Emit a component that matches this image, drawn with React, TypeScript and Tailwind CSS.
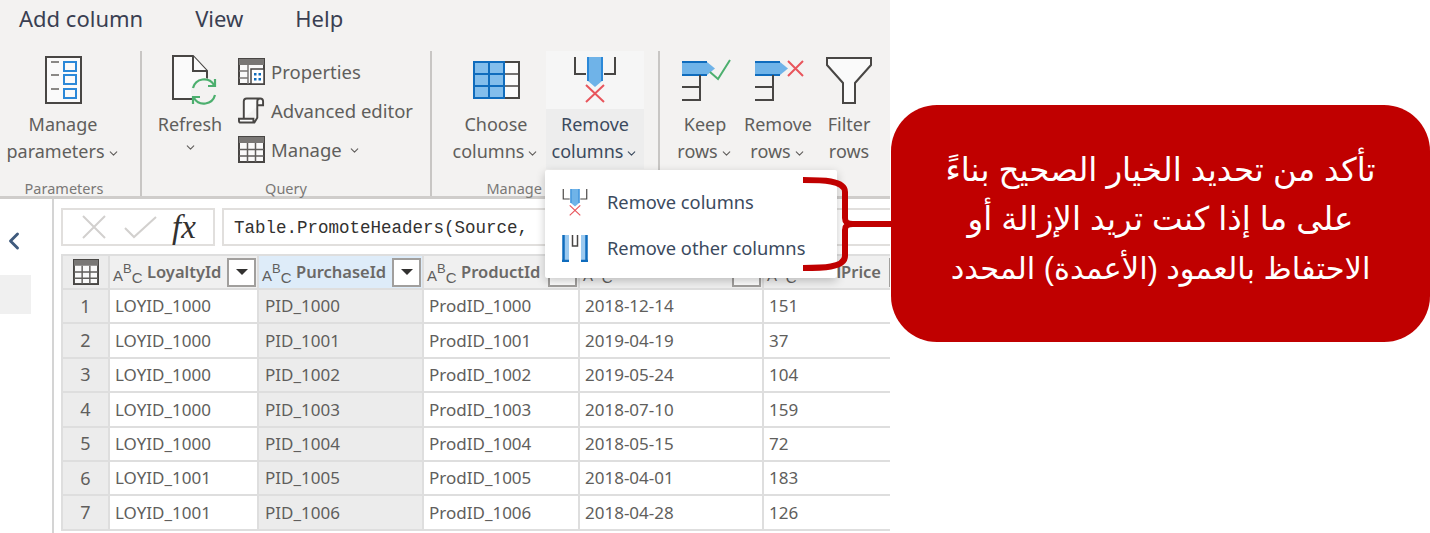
import { ChevronDown, ChevronLeft } from "lucide-react"

const UI = "font-['Noto_Sans',sans-serif]"
const COLS = "grid grid-cols-[49px_149px_165px_156px_184px_160px]"

const rows = [
  ["1", "LOYID_1000", "PID_1000", "ProdID_1000", "2018-12-14", "151"],
  ["2", "LOYID_1000", "PID_1001", "ProdID_1001", "2019-04-19", "37"],
  ["3", "LOYID_1000", "PID_1002", "ProdID_1002", "2019-05-24", "104"],
  ["4", "LOYID_1000", "PID_1003", "ProdID_1003", "2018-07-10", "159"],
  ["5", "LOYID_1000", "PID_1004", "ProdID_1004", "2018-05-15", "72"],
  ["6", "LOYID_1001", "PID_1005", "ProdID_1005", "2018-04-01", "183"],
  ["7", "LOYID_1001", "PID_1006", "ProdID_1006", "2018-04-28", "126"],
]

function ManageParamsIcon() {
  return (
    <svg width="37" height="48" viewBox="0 0 37 48" fill="none">
      <rect x="1" y="1" width="35" height="46" fill="#fafafa" stroke="#484644" strokeWidth="2" />
      <path d="M6 6h8M6 19h8M6 33h8" stroke="#8a8886" strokeWidth="2" />
      <rect x="19" y="6" width="12" height="9" stroke="#2b88d8" strokeWidth="2" />
      <rect x="19" y="19" width="12" height="9" stroke="#2b88d8" strokeWidth="2" />
      <rect x="19" y="33" width="12" height="9" stroke="#2b88d8" strokeWidth="2" />
    </svg>
  )
}

function RefreshIcon() {
  return (
    <svg width="46" height="50" viewBox="0 0 46 50" fill="none">
      <path d="M1 1h20l14 15v28H1z" fill="#fafafa" stroke="#484644" strokeWidth="2" />
      <path d="M21 1v15h14" fill="#fafafa" stroke="#484644" strokeWidth="2" />
      <circle cx="32" cy="36" r="13" fill="#f3f2f1" />
      <path d="M21 33a11.500 11.500 0 0 1 21-3" stroke="#4caf6e" strokeWidth="2.200" />
      <path d="M43 40a11.500 11.500 0 0 1-21 3" stroke="#4caf6e" strokeWidth="2.200" />
      <path d="M43 24v7h-7M21 49v-7h7" stroke="#4caf6e" strokeWidth="2.200" />
    </svg>
  )
}

function PropertiesIcon() {
  return (
    <svg width="27" height="27" viewBox="0 0 27 27" fill="none">
      <rect x="1" y="1" width="25" height="25" fill="#fafafa" stroke="#484644" strokeWidth="2" />
      <rect x="1" y="1" width="25" height="6" fill="#797775" />
      <path d="M10 7v19M1 13h9M1 20h9" stroke="#797775" strokeWidth="1.500" />
      <rect x="13" y="11" width="13" height="15" fill="#fff" stroke="#484644" strokeWidth="1.500" />
      <path d="M16 15h2.500v2.500H16zM20.500 15H23v2.500h-2.500zM16 20h2.500v2.500H16zM20.500 20H23v2.500h-2.500z" fill="#0f6cbd" />
    </svg>
  )
}

function EditorIcon() {
  return (
    <svg width="28" height="28" viewBox="0 0 28 28" fill="none">
      <path d="M6 22V4a3 3 0 0 1 3-3h14a3 3 0 0 1 3 3v4h-5M23 1a3 3 0 0 0-3 3v17l-3 5H3a2 2 0 0 1-2-2v-2h15v4" fill="#fafafa" stroke="#484644" strokeWidth="2" />
    </svg>
  )
}

function TableIcon({ size = 27 }: { size?: number }) {
  return (
    <svg width={size} height={size} viewBox="0 0 27 27" fill="none">
      <rect x="1" y="1" width="25" height="25" fill="#fafafa" stroke="#484644" strokeWidth="2" />
      <rect x="1" y="1" width="25" height="6" fill="#797775" />
      <path d="M9.500 7v19M17.500 7v19M1 13.500h25M1 20h25" stroke="#605e5c" strokeWidth="1.500" />
    </svg>
  )
}

function ChooseColumnsIcon() {
  return (
    <svg width="47" height="38" viewBox="0 0 47 38" fill="none">
      <rect x="1" y="1" width="30" height="36" fill="#83beec" />
      <rect x="31" y="1" width="15" height="36" fill="#fafafa" stroke="#484644" strokeWidth="2" />
      <path d="M31 13h15M31 25h15" stroke="#484644" strokeWidth="1.500" />
      <path d="M1 1h30v36H1zM16 1v36M1 13h30M1 25h30" stroke="#0f6cbd" strokeWidth="2" />
    </svg>
  )
}

function RemoveColumnsIcon({ small = false }: { small?: boolean }) {
  const w = small ? 26 : 42
  const h = small ? 27 : 46
  return (
    <svg width={w} height={h} viewBox="0 0 42 46" fill="none">
      <path d="M1 0v17h11M41 0v17H30" stroke="#484644" strokeWidth="2" />
      <path d="M14 0h14v24l-7 6-7-6z" fill="#6fb3e8" />
      <path d="M14 0v24M28 0v24" stroke="#2b88d8" strokeWidth="2" />
      <path d="M12 28l18 17M30 28L12 45" stroke="#e8555c" strokeWidth="2" />
    </svg>
  )
}

function RemoveOtherIcon() {
  return (
    <svg width="26" height="28" viewBox="0 0 26 28" fill="none">
      <path d="M1 1h6v26H1z" fill="#9ccaf0" />
      <path d="M19 1h6v26h-6z" fill="#9ccaf0" />
      <path d="M1.500 1v26M0 27h7M19 27h7M24.500 1v26" stroke="#0f6cbd" strokeWidth="2.500" />
      <path d="M10.500 1v11h5V1" stroke="#484644" strokeWidth="1.500" />
    </svg>
  )
}

function RowsIcon({ remove = false }: { remove?: boolean }) {
  return (
    <svg width="52" height="42" viewBox="0 0 52 42" fill="none" className="ml-[3px]">
      <path d="M1 3h25l8 6.500-8 6.500H1z" fill="#6fb3e8" />
      <path d="M1 3h25M1 16h25" stroke="#0f6cbd" strokeWidth="2" />
      <path d="M1 28h17M1 41h18V16" stroke="#484644" strokeWidth="2" />
      {remove ? (
        <path d="M34 2l15 15M49 2L34 17" stroke="#e8555c" strokeWidth="2" />
      ) : (
        <path d="M29 13l8 7L49 1" stroke="#4caf6e" strokeWidth="2" />
      )}
    </svg>
  )
}

function FilterIcon() {
  return (
    <svg width="46" height="47" viewBox="0 0 46 47" fill="none">
      <path d="M1 1h44v7L29 26v20H17V26L1 8z" fill="#fafafa" stroke="#484644" strokeWidth="2" />
    </svg>
  )
}

function TypeIcon() {
  return (
    <span className="inline-flex w-[30px] shrink-0 items-center font-['Liberation_Sans',sans-serif] text-[15px] leading-none text-[#605e5c]">
      <span className="translate-y-[3px]">A</span>
      <span className="-translate-y-[4px] text-[13px]">B</span>
      <span className="translate-y-[5px]">C</span>
    </span>
  )
}

function FilterButton() {
  return (
    <span className="flex h-[29px] w-[29px] shrink-0 items-center justify-center border-2 border-[#a19f9d] bg-white">
      <span className="h-0 w-0 border-x-[6px] border-t-[6px] border-x-transparent border-t-[#323130]" />
    </span>
  )
}

function RibbonButton({
  icon,
  line1,
  line2,
  width,
  caret = true,
  active = false,
}: {
  icon: React.ReactNode
  line1: string
  line2?: string
  width: string
  caret?: boolean
  active?: boolean
}) {
  return (
    <div className={`flex flex-col items-center ${width}`}>
      <div className={`flex h-[58px] w-full items-center justify-center ${active ? "bg-[#f6f6f6]" : ""}`}>{icon}</div>
      <div className={`flex h-[60px] w-full flex-col items-center pt-[2px] text-[18px] leading-[27px] ${active ? "bg-[#ededed] text-[#3b4a5e]" : "text-[#605e5c]"}`}>
        <span>{line1}</span>
        <span className="flex items-center gap-[2px]">
          {line2}
          {caret && <ChevronDown size={13} strokeWidth={2} className="mt-[3px]" />}
        </span>
      </div>
    </div>
  )
}

function GroupLabel({ children }: { children: React.ReactNode }) {
  return <div className="flex h-[27px] items-end justify-center text-[14.500px] leading-[16px] text-[#7a7876]">{children}</div>
}

function SmallAction({ icon, label, caret = false }: { icon: React.ReactNode; label: string; caret?: boolean }) {
  return (
    <div className="flex h-[39px] items-center gap-[6px] text-[18.500px] text-[#605e5c]">
      <span className="flex w-[27px] justify-center">{icon}</span>
      {label}
      {caret && <ChevronDown size={13} strokeWidth={2} className="mt-[2px]" />}
    </div>
  )
}

function HeaderCell({ name, selected = false }: { name: string; selected?: boolean }) {
  return (
    <div className={`flex items-center border-r-2 border-[#dedede] pl-[3px] pr-[1px] ${selected ? "bg-[#deecf9]" : "bg-[#f0f0f0]"}`}>
      <TypeIcon />
      <span className="ml-[4px] flex-1 truncate text-[16.500px] font-semibold text-[#6b6967]">{name}</span>
      <FilterButton />
    </div>
  )
}

export default function App() {
  return (
    <div className={`flex h-[533px] w-[1430px] overflow-hidden bg-white ${UI}`}>
      {/* Power Query window */}
      <div className="relative h-[533px] w-[890px] shrink-0 overflow-hidden">
        <header className="h-[199px] border-b-[3px] border-[#cfcdcb] bg-[#f3f2f1]">
          <nav className="flex h-[51px] pb-[15px] pl-[19px] text-[22px] text-[#3a3f52]">
            <span className="flex items-center">Add column</span>
            <span className="ml-[52px] flex items-center">View</span>
            <span className="ml-[52px] flex items-center">Help</span>
          </nav>

          <div className="flex h-[145px]">
            <section className="w-[142px] border-r-2 border-[#c8c6c4]">
              <div className="flex justify-start">
                <RibbonButton width="w-[126px]" icon={<ManageParamsIcon />} line1="Manage" line2="parameters" />
              </div>
              <div className="w-[128px]">
                <GroupLabel>Parameters</GroupLabel>
              </div>
            </section>

            <section className="w-[290px] border-r-2 border-[#c8c6c4]">
              <div className="flex h-[118px] pl-[15px]">
                <RibbonButton width="w-[66px]" icon={<div className="ml-[9px]"><RefreshIcon /></div>} line1="Refresh" />
                <div className="ml-[15px] pt-[1px]">
                  <SmallAction icon={<PropertiesIcon />} label="Properties" />
                  <SmallAction icon={<EditorIcon />} label="Advanced editor" />
                  <SmallAction icon={<TableIcon />} label="Manage" caret />
                </div>
              </div>
              <GroupLabel>Query</GroupLabel>
            </section>

            <section className="w-[228px] border-r-2 border-[#c8c6c4]">
              <div className="flex h-[118px] pl-[14px]">
                <RibbonButton width="w-[100px]" icon={<ChooseColumnsIcon />} line1="Choose" line2="columns" />
                <RibbonButton width="w-[98px]" active icon={<RemoveColumnsIcon />} line1="Remove" line2="columns" />
              </div>
              <GroupLabel>Manage columns</GroupLabel>
            </section>

            <section className="flex-1">
              <div className="flex h-[118px] gap-[4px] pl-[14px]">
                <RibbonButton width="w-[62px]" icon={<RowsIcon />} line1="Keep" line2="rows" />
                <RibbonButton width="w-[76px]" icon={<RowsIcon remove />} line1="Remove" line2="rows" />
                <RibbonButton width="w-[58px]" caret={false} icon={<FilterIcon />} line1="Filter" line2="rows" />
              </div>
            </section>
          </div>
        </header>

        <div className="flex h-[334px]">
          <aside className="w-[54px] shrink-0 border-r-2 border-[#d4d4d4]">
            <div className="flex h-[76px] items-end pb-[20px]">
              <ChevronLeft size={28} strokeWidth={2.500} className="text-[#3f5a7d]" />
            </div>
            <div className="h-[39px] w-[31px] bg-[#f0f0f0]" />
          </aside>

          <main className="min-w-0 flex-1 pl-[7px] pt-[9px]">
            <div className="flex h-[38px] gap-[7px]">
              <div className="flex w-[154px] shrink-0 items-center border-2 border-[#e1dfdd] pl-[18px]">
                <svg width="80" height="24" viewBox="0 0 80 24" fill="none" stroke="#d2d0ce" strokeWidth="2">
                  <path d="M2 1l22 22M24 1L2 23" />
                  <path d="M44 13l9 9L75 2" />
                </svg>
                <span className="ml-[11px] font-['Liberation_Serif',serif] text-[33px] italic leading-none text-[#323130]">fx</span>
              </div>
              <div className="flex min-w-0 flex-1 items-center overflow-hidden border-2 border-r-0 border-[#e1dfdd] pl-[10px] pt-[2px] font-['Liberation_Mono',monospace] text-[17.500px] text-[#323130]">
                <span className="whitespace-pre">{"Table.PromoteHeaders(Source,    [PromoteAllScalars=true])"}</span>
              </div>
            </div>

            <div className="mt-[8px] w-[880px]">
              <div className={`${COLS} h-[36px] border-y-2 border-[#dedede]`}>
                <div className="flex items-center justify-center border-x-2 border-[#dedede] bg-[#ececec]">
                  <TableIcon size={26} />
                </div>
                <HeaderCell name="LoyaltyId" />
                <HeaderCell name="PurchaseId" selected />
                <HeaderCell name="ProductId" />
                <HeaderCell name="PurchaseDate" />
                <div className="flex items-center bg-[#f0f0f0] pl-[3px]">
                  <TypeIcon />
                  <span className="ml-[-5px] w-[89px] whitespace-nowrap text-right text-[16.500px] font-semibold text-[#6b6967]">TotalPrice</span>
                  <span className="ml-[8px]"><FilterButton /></span>
                </div>
              </div>

              {rows.map((row) => (
                <div key={row[0]} className={`${COLS} h-[34.400px] text-[17px] text-[#605e5c]`}>
                  <div className="flex items-center justify-center border-x-2 border-b-2 border-[#dedede] bg-[#ececec] text-[18px]">
                    {row[0]}
                  </div>
                  <div className="flex items-center border-r-2 border-b-2 border-[#dedede] pl-[5px]">{row[1]}</div>
                  <div className="flex items-center border-r-2 border-b-2 border-[#dedede] bg-[#ececec] pl-[6px]">{row[2]}</div>
                  <div className="flex items-center border-r-2 border-b-2 border-[#dedede] pl-[5px]">{row[3]}</div>
                  <div className="flex items-center border-r-2 border-b-2 border-[#dedede] pl-[5px]">{row[4]}</div>
                  <div className="flex items-center border-b-2 border-[#dedede] pl-[5px]">{row[5]}</div>
                </div>
              ))}
            </div>
          </main>
        </div>

        {/* Remove columns dropdown */}
        <div className="absolute left-[545px] top-[170px] w-[292px] rounded-[2px] bg-white pb-[7px] pt-[9px] text-[18.300px] text-[#3b4a5e] shadow-[0_3px_10px_rgba(0,0,0,0.22)]">
          <div className="flex h-[46px] items-center pl-[17px]">
            <RemoveColumnsIcon small />
            <span className="ml-[19px]">Remove columns</span>
          </div>
          <div className="flex h-[46px] items-center pl-[17px]">
            <RemoveOtherIcon />
            <span className="ml-[19px]">Remove other columns</span>
          </div>
        </div>
      </div>

      {/* Callout */}
      <div className="relative flex-1 pl-px pt-[105px]">
        <svg className="absolute -left-[90px] top-[175px] overflow-visible" width="92" height="98" viewBox="0 0 92 98" fill="none">
          <path
            d="M3 5c18 0 42 0 42 12v26c0 5 3 6 8 6h39M53 49c-5 0-8 1-8 6v26c0 12-24 12-42 12"
            stroke="#c00000"
            strokeWidth="6"
          />
        </svg>
        <div
          dir="rtl"
          className="flex h-[237px] flex-col items-center justify-center rounded-[46px] bg-[#c00000] pb-[8px] font-['Liberation_Sans','DejaVu_Sans',sans-serif] text-[32.500px] leading-[49px] text-white"
        >
          <p>تأكد من تحديد الخيار الصحيح بناءً</p>
          <p>على ما إذا كنت تريد الإزالة أو</p>
          <p className="text-[30.500px]">الاحتفاظ بالعمود (الأعمدة) المحدد</p>
        </div>
      </div>
    </div>
  )
}
